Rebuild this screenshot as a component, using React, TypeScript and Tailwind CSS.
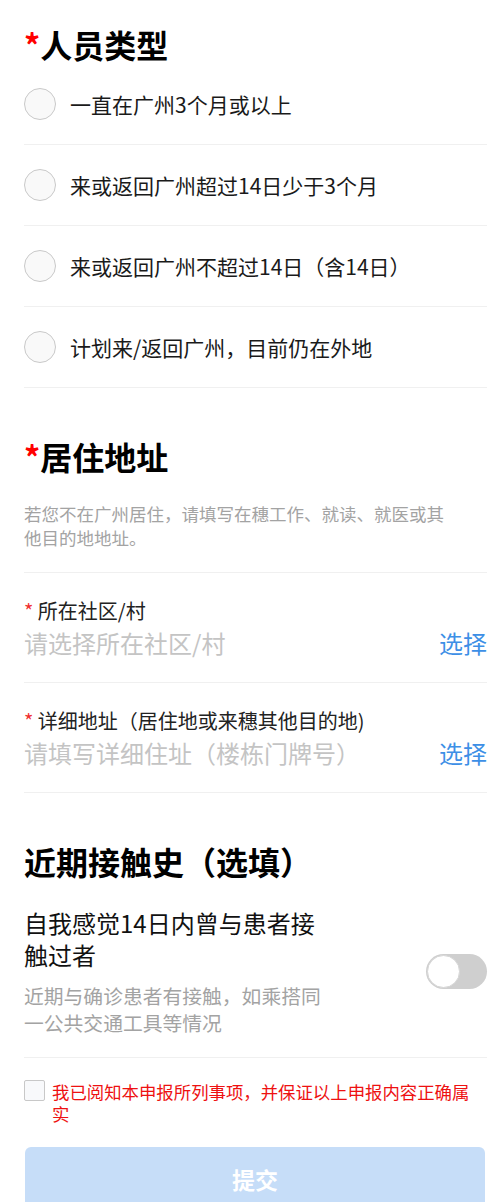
import { useState } from "react"

const font = { fontFamily: '"Noto Sans CJK SC", "Noto Sans", sans-serif' }

const personTypes = [
  "一直在广州3个月或以上",
  "来或返回广州超过14日少于3个月",
  "来或返回广州不超过14日（含14日）",
  "计划来/返回广州，目前仍在外地",
]

const SectionTitle = ({ text, required }: { text: string; required?: boolean }) => (
  <h2 className="text-[32px] font-bold leading-[40px] text-black">
    {required && <span className="text-[#ff0000]">*</span>}
    {text}
  </h2>
)

const PickField = ({ label, placeholder }: { label: string; placeholder: string }) => (
  <div className="border-b border-[#f0f0f0] pt-[25px] pb-[23px]">
    <div className="text-[20px] leading-[26px] text-[#222]">
      <span className="text-[#f03030]">*</span> {label}
    </div>
    <div className="mt-[3px] flex items-center justify-between">
      <span className="text-[24px] leading-[32px] text-[#c4c4c4]">{placeholder}</span>
      <button className="text-[24px] leading-[32px] text-[#3d8fe6]">选择</button>
    </div>
  </div>
)

export default function App() {
  const [type, setType] = useState<number | null>(null)
  const [contact, setContact] = useState(false)
  const [agreed, setAgreed] = useState(false)

  return (
    <div className="min-h-screen bg-white pl-6 pr-3 pt-6" style={font}>
      <SectionTitle text="人员类型" required />
      <div>
        {personTypes.map((t, i) => (
          <label
            key={t}
            className="flex h-[81px] cursor-pointer items-center border-b border-[#f0f0f0]"
            onClick={() => setType(i)}
          >
            <span
              className={
                type === i
                  ? "h-8 w-8 shrink-0 rounded-full border-[9px] border-[#3d8fe6] bg-white"
                  : "h-8 w-8 shrink-0 rounded-full border border-[#c9c9c9] bg-[#f9f9f9]"
              }
            />
            <span className="ml-[14px] text-[21px] leading-[28px] text-[#1a1a1a]">{t}</span>
          </label>
        ))}
      </div>

      <div className="mt-[48px]">
        <SectionTitle text="居住地址" required />
        <div className="border-b border-[#f0f0f0] pt-[26px] pb-[23px]">
          <p className="w-[430px] text-[17.5px] leading-[23.5px] text-[#a3a3a3]">
            若您不在广州居住，请填写在穗工作、就读、就医或其他目的地地址。
          </p>
        </div>
        <PickField label="所在社区/村" placeholder="请选择所在社区/村" />
        <PickField label="详细地址（居住地或来穗其他目的地)" placeholder="请填写详细住址（楼栋门牌号）" />
      </div>

      <div className="mt-[48px]">
        <SectionTitle text="近期接触史（选填）" />
        <div className="mt-[26px] flex items-center justify-between border-b border-[#f0f0f0] pb-[21px]">
          <div className="w-[305px]">
            <div className="text-[24px] leading-[32px] text-[#111]">自我感觉14日内曾与患者接触过者</div>
            <div className="mt-[11px] text-[19.8px] leading-[27px] text-[#a3a3a3]">
              近期与确诊患者有接触，如乘搭同一公共交通工具等情况
            </div>
          </div>
          <button
            onClick={() => setContact(!contact)}
            className={
              contact
                ? "flex h-[35px] w-[61px] items-center justify-end rounded-full bg-[#3d8fe6] p-px"
                : "flex h-[35px] w-[61px] items-center justify-start rounded-full bg-[#cfcfcf] p-px"
            }
          >
            <span className="h-[33px] w-[33px] rounded-full border border-[#d6d6d6] bg-white" />
          </button>
        </div>
      </div>

      <label className="mt-[22px] flex cursor-pointer items-start" onClick={() => setAgreed(!agreed)}>
        <span
          className={
            agreed
              ? "h-[21px] w-[21px] shrink-0 rounded-[2px] border border-[#3d8fe6] bg-[#3d8fe6]"
              : "h-[21px] w-[21px] shrink-0 rounded-[2px] border border-[#c8c8c8] bg-[#f8f9fb]"
          }
        />
        <span className="ml-[7px] mt-px w-[425px] text-[17.4px] leading-[22px] text-[#ee1111]">
          我已阅知本申报所列事项，并保证以上申报内容正确属实
        </span>
      </label>

      <button className="mx-px mt-[22px] flex h-16 w-[460px] items-center justify-center rounded-md bg-[#c6ddf8] text-[23px] font-bold text-white">
        提交
      </button>
    </div>
  )
}
